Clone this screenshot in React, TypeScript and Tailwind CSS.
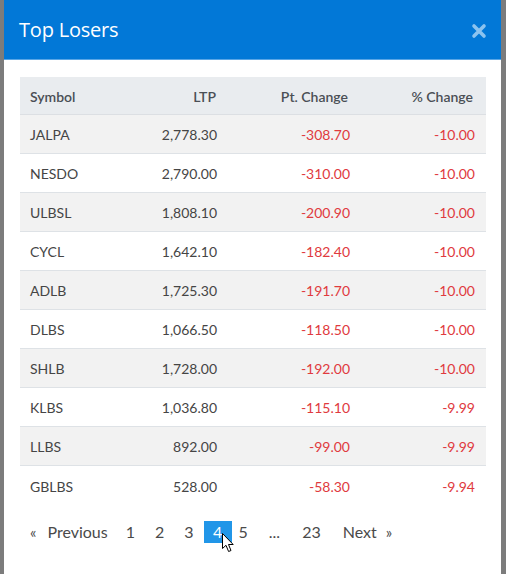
import React from "react";

const rows = [
  ["JALPA", "2,778.30", "-308.70", "-10.00"],
  ["NESDO", "2,790.00", "-310.00", "-10.00"],
  ["ULBSL", "1,808.10", "-200.90", "-10.00"],
  ["CYCL", "1,642.10", "-182.40", "-10.00"],
  ["ADLB", "1,725.30", "-191.70", "-10.00"],
  ["DLBS", "1,066.50", "-118.50", "-10.00"],
  ["SHLB", "1,728.00", "-192.00", "-10.00"],
  ["KLBS", "1,036.80", "-115.10", "-9.99"],
  ["LLBS", "892.00", "-99.00", "-9.99"],
  ["GBLBS", "528.00", "-58.30", "-9.94"],
];

const cols = "grid grid-cols-[110px_97px_133px_126px]";

export default function App() {
  return (
    <div className="w-[506px] h-[574px] bg-[#7c7c7c] flex overflow-hidden">
      <div className="ml-[4px] w-[497px] h-full bg-white flex flex-col relative">
        <div className="h-[60px] bg-[#0278d7] flex items-center justify-between pl-[15px] pr-[14px] border-b border-[#5aa6e6]">
          <span className="text-white text-[20px] font-['Open_Sans',sans-serif] tracking-[-0.2px]">Top Losers</span>
          <svg width="16" height="16" viewBox="0 0 16 16" className="mt-[2px]">
            <path d="M3 3 L13 13 M13 3 L3 13" stroke="#8cc3ef" strokeWidth="3.6" strokeLinecap="round" />
          </svg>
        </div>
        <div className="pl-[16px] pt-[17px] font-['Lato',sans-serif] text-[14px] text-[#454545]">
          <div className="w-[466px]">
            <div className={`${cols} h-[38px] items-center pt-[1px] bg-[#e9ecef] border-b border-[#dcdfe3] font-semibold text-[#4a4f55]`}>
              <div className="pl-[10px]">Symbol</div>
              <div className="text-right pr-[11px]">LTP</div>
              <div className="text-right pr-[12px]">Pt. Change</div>
              <div className="text-right pr-[13px]">% Change</div>
            </div>
            {rows.map((r, i) => (
              <div
                key={r[0]}
                className={`${cols} h-[39px] items-center pt-[1px] ${i % 2 === 0 ? "bg-[#f2f2f2]" : "bg-white"} ${i < rows.length - 1 ? "border-b border-[#dee2e6]" : ""}`}
              >
                <div className="pl-[10px]">{r[0]}</div>
                <div className="text-right pr-[10px]">{r[1]}</div>
                <div className="text-right pr-[10px] text-[#e03a3e]">{r[2]}</div>
                <div className="text-right pr-[11px] text-[#e03a3e]">{r[3]}</div>
              </div>
            ))}
          </div>
          <div className="flex items-center mt-[15px] text-[16px] text-[#4a4a4a] relative">
            <span className="pl-[10px] pr-[9px] text-[15px]">«</span>
            <span className="px-[2px]">Previous</span>
            <span className="px-[10px] ml-[6px]">1</span>
            <span className="px-[10px]">2</span>
            <span className="px-[10px]">3</span>
            <span className="w-[28px] h-[22px] bg-[#2196e8] text-white flex items-center justify-center">4</span>
            <span className="pl-[7px] pr-[9px]">5</span>
            <span className="px-[12px]">...</span>
            <span className="px-[10px]">23</span>
            <span className="pl-[12px] pr-[9px]">Next</span>
            <span className="text-[15px]">»</span>
            <svg
              className="absolute left-[202px] top-[13px]"
              width="13"
              height="20"
              viewBox="0 0 13 20"
            >
              <path
                d="M0.5 0.5 L0.5 15.5 L4 12.3 L6.6 18.5 L9 17.5 L6.5 11.5 L11.2 11.5 Z"
                fill="white"
                stroke="black"
                strokeWidth="1"
                strokeLinejoin="round"
              />
            </svg>
          </div>
        </div>
      </div>
    </div>
  );
}
